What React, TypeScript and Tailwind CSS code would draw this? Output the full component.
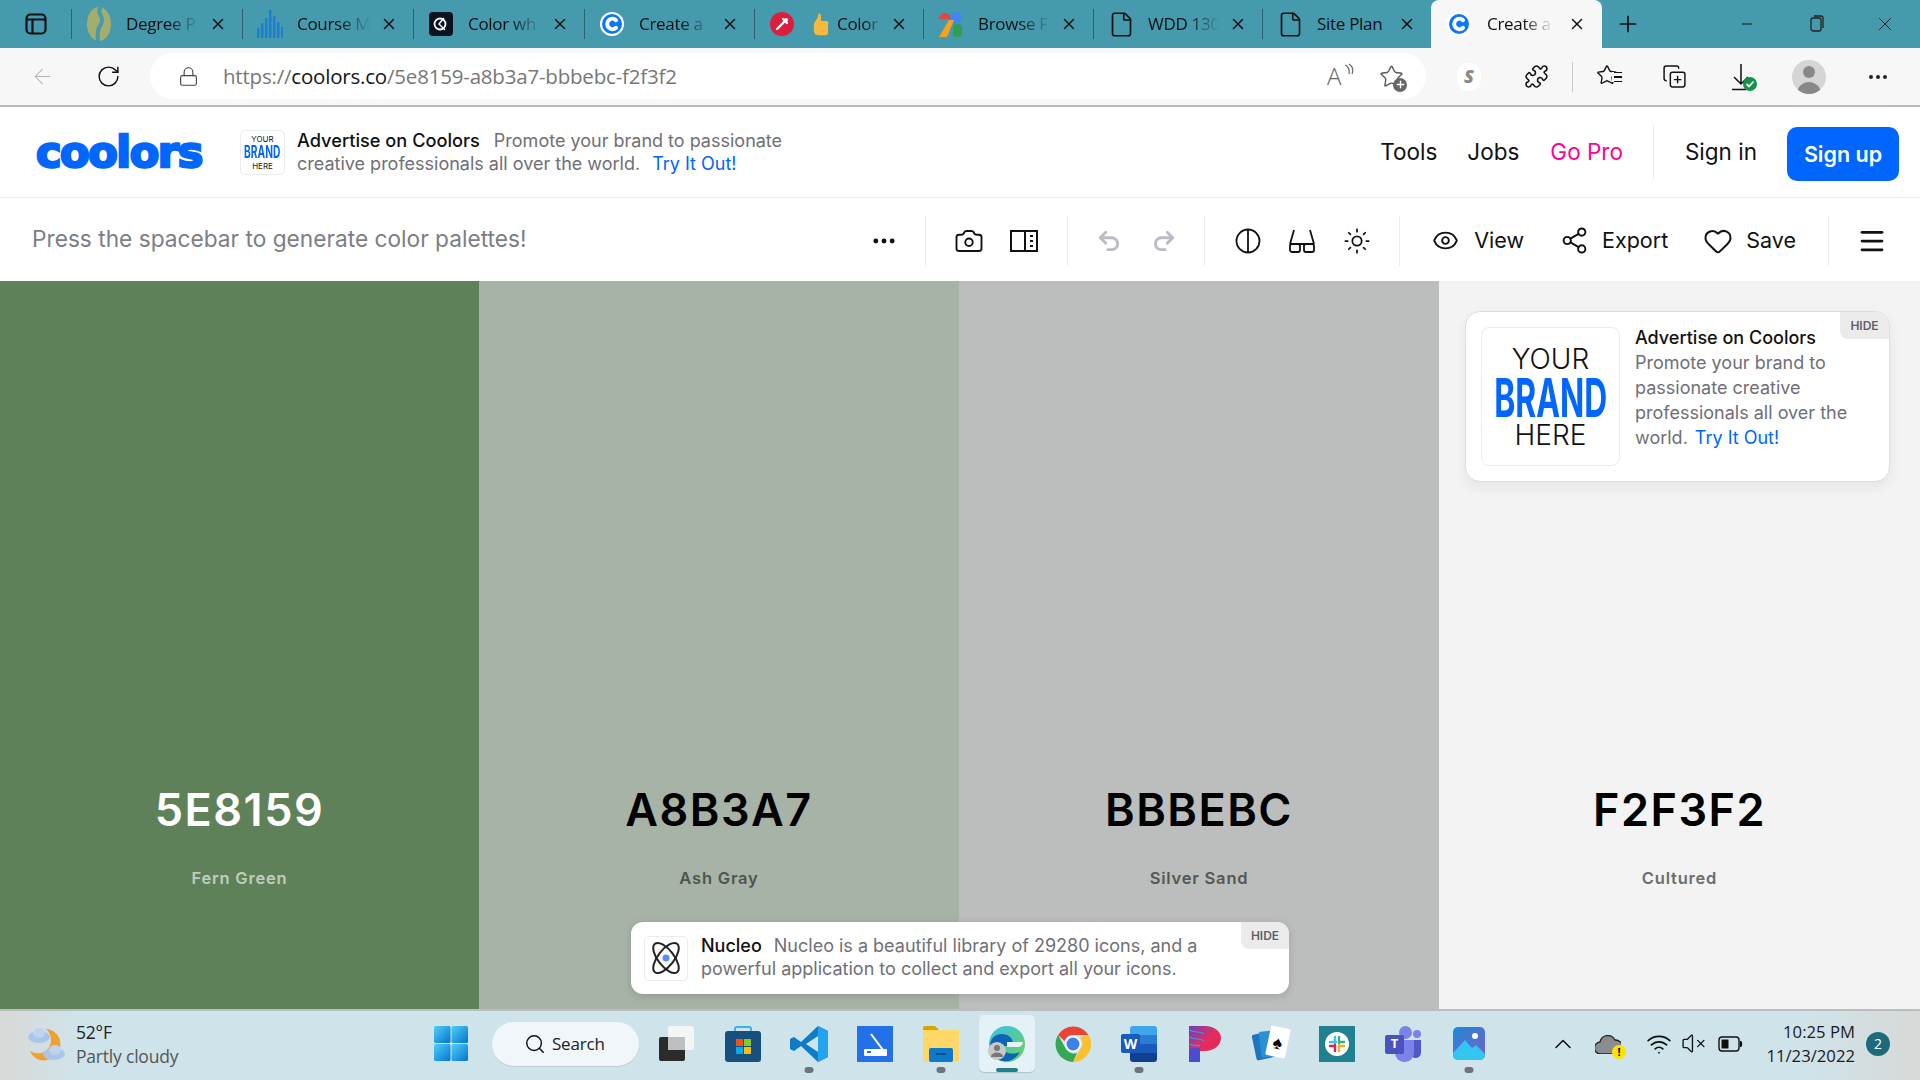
import React from 'react';
import {
  Camera,
  CopyPlus,
  Eye,
  File,
  Heart,
  Lock,
  Menu,
  Minus,
  MoreHorizontal,
  Plus,
  Puzzle,
  Redo2,
  RotateCw,
  Search,
  Share2,
  Star,
  Sun,
  Undo2,
  ArrowLeft,
  ChevronUp,
  Wifi,
  VolumeX,
  X,
} from 'lucide-react';

const systemFont = "font-['Open_Sans',sans-serif]";
const siteFont = "font-['Inter',sans-serif]";

const CoolorsFavicon = ({ size = 24 }: { size?: number }) => (
  <svg width={size} height={size} viewBox="0 0 24 24">
    <circle cx="12" cy="12" r="12" fill="#fff" />
    <circle cx="12" cy="12" r="10" fill="#0a78f5" />
    <path d="M16 8.2a5.2 5.2 0 1 0 0 7.6" fill="none" stroke="#fff" strokeWidth="4" strokeLinecap="round" />
  </svg>
);

const DegreeIcon = () => (
  <svg width="26" height="36" viewBox="0 0 26 36">
    <ellipse cx="13" cy="18" rx="12" ry="17" fill="#a3ad6d" />
    <path d="M15 1c-6 6 5 10 0 17-3 4-4 9-3 17" fill="none" stroke="#469aae" strokeWidth="4" />
  </svg>
);

const BarsIcon = () => (
  <svg width="26" height="28" viewBox="0 0 26 28" fill="#1c7fd6">
    <rect x="0" y="18" width="2.5" height="10" />
    <rect x="4" y="13" width="2.5" height="15" />
    <rect x="8" y="8" width="2.5" height="20" />
    <rect x="12" y="0" width="2.5" height="28" />
    <rect x="16" y="6" width="2.5" height="22" />
    <rect x="20" y="12" width="2.5" height="16" />
    <rect x="24" y="17" width="2" height="11" />
  </svg>
);

const ColorWheelIcon = () => (
  <svg width="24" height="24" viewBox="0 0 24 24">
    <rect width="24" height="24" rx="4" fill="#0b1220" />
    <circle cx="11" cy="12" r="5.5" fill="none" stroke="#fff" strokeWidth="1.8" />
    <path d="M15 6l-5 6 6 6" fill="none" stroke="#fff" strokeWidth="1.4" />
  </svg>
);

const DropperIcon = () => (
  <svg width="24" height="24" viewBox="0 0 24 24">
    <circle cx="12" cy="12" r="12" fill="#dc1e3c" />
    <path d="M7 17l7-7M13 7l4 4" stroke="#fff" strokeWidth="2.4" strokeLinecap="round" />
    <circle cx="16" cy="8" r="2" fill="#fff" />
  </svg>
);

const ThumbIcon = () => (
  <svg width="16" height="25" viewBox="0 0 18 26">
    <path d="M6 1c2-1 3 1 3 3v5h6c2 0 3 2 2 4v9c0 2-1 3-3 3H6c-3 0-5-2-5-4v-8c0-3 5-6 5-12z" fill="#f6b93b" />
  </svg>
);

const BrowseIcon = () => (
  <svg width="24" height="26" viewBox="0 0 24 26">
    <path d="M0 8a6 6 0 0 1 12 0z" fill="#e2453a" />
    <circle cx="17" cy="7" r="6" fill="#4285f4" />
    <path d="M0 26L10 9h5L8 26z" fill="#f6a21c" />
    <rect x="14" y="13" width="9" height="13" rx="4" fill="#2e9e4f" />
  </svg>
);

const tabFade = '[mask-image:linear-gradient(to_right,black_50%,transparent_88%)]';

const tabs = [
  { title: 'Degree P', icon: <DegreeIcon />, width: 'w-[171px]', fade: tabFade },
  { title: 'Course M', icon: <BarsIcon />, width: 'w-[171px]', fade: tabFade },
  { title: 'Color wh', icon: <ColorWheelIcon />, width: 'w-[171px]', fade: tabFade },
  { title: 'Create a', icon: <CoolorsFavicon />, width: 'w-[170px]', fade: tabFade },
  { title: 'Color', icon: <DropperIcon />, extra: <ThumbIcon />, width: 'w-[169px]', fade: tabFade },
  { title: 'Browse F', icon: <BrowseIcon />, width: 'w-[170px]', fade: tabFade },
  { title: 'WDD 130', icon: <File size={27} strokeWidth={1.5} />, width: 'w-[169px]', fade: tabFade },
  { title: 'Site Plan', icon: <File size={27} strokeWidth={1.5} />, width: 'w-[169px]', fade: '' },
];

const TabBar = () => (
  <div className={`flex h-12 shrink-0 bg-[#469aae] text-[#101010] ${systemFont}`}>
    <div className="flex w-[71px] items-center pl-6">
      <svg width="24" height="24" viewBox="0 0 24 24" fill="none" stroke="#111" strokeWidth="2.2">
        <rect x="2.5" y="2.5" width="19" height="19" rx="4" />
        <path d="M3 7.5h18M8.5 8v13" />
      </svg>
    </div>
    {tabs.map((tab) => (
      <div key={tab.title} className={`flex h-full items-center ${tab.width}`}>
        <div className="h-[30px] w-px bg-[#2a6472]" />
        <div className="flex h-full flex-1 items-center pr-[15px]">
          <div className="flex w-[54px] items-center justify-center">{tab.icon}</div>
          {tab.extra && <div className="ml-[4px] mr-[8px] flex w-[16px] justify-center">{tab.extra}</div>}
          <div className={`flex-1 overflow-hidden whitespace-nowrap text-[17px] tracking-[-0.3px] ${tab.fade}`}>
            {tab.title}
          </div>
          <X size={18} strokeWidth={2} />
        </div>
      </div>
    ))}
    <div className="flex h-full w-[171px] items-center rounded-t-lg bg-[#f7f7f7] pr-[16px]">
      <div className="flex w-[56px] items-center justify-center">
        <CoolorsFavicon />
      </div>
      <div className="flex-1 overflow-hidden whitespace-nowrap text-[17px] tracking-[-0.3px] [mask-image:linear-gradient(to_right,black_45%,transparent_82%)]">
        Create a
      </div>
      <X size={18} strokeWidth={2} />
    </div>
    <div className="flex w-[52px] items-center justify-center">
      <Plus size={26} strokeWidth={1.6} />
    </div>
    <div className="flex flex-1 items-center justify-end">
      <div className="flex w-[70px] justify-center">
        <Minus size={16} strokeWidth={1.5} />
      </div>
      <div className="flex w-[70px] justify-center">
        <svg width="16" height="18" viewBox="0 0 16 18" fill="none" stroke="#222" strokeWidth="1.3">
          <rect x="2" y="3" width="10" height="13" rx="2" />
          <path d="M5 1h7a2 2 0 0 1 2 2v10" />
        </svg>
      </div>
      <div className="mr-[2px] flex w-[66px] justify-center">
        <X size={22} strokeWidth={1} />
      </div>
    </div>
  </div>
);

const AddressBar = () => (
  <div className={`flex h-[59px] shrink-0 items-start border-b-2 border-[#b9b9b9] bg-[#f7f7f7] ${systemFont}`}>
    <div className="flex h-[57px] w-[150px] items-center">
      <div className="flex w-[84px] justify-center">
        <ArrowLeft size={25} strokeWidth={1} color="#b5b5b5" />
      </div>
      <div className="flex w-[48px] justify-center">
        <RotateCw size={25} strokeWidth={1.4} color="#111" />
      </div>
    </div>
    <div className="mt-[5px] flex h-[46px] w-[1276px] items-center rounded-full bg-white pl-[28px]">
      <Lock size={21} strokeWidth={1.3} color="#444" />
      <div className="ml-[24px] flex-1 text-[20.5px] tracking-[-0.2px] text-[#777]">
        https://<span className="text-[#151515]">coolors.co</span>/5e8159-a8b3a7-bbbebc-f2f3f2
      </div>
      <div className="relative mr-[26px] flex w-[26px] items-start text-[24px] font-light leading-none text-[#666]">
        A
        <svg className="absolute -right-[1px] -top-[1px]" width="11" height="14" viewBox="0 0 11 14" fill="none" stroke="#666" strokeWidth="1.2">
          <path d="M2 2c3 1 5 5 4 9M6 1c3 2 5 5 3 10" />
        </svg>
      </div>
      <div className="relative mr-[22px]">
        <Star size={25} strokeWidth={1.3} color="#555" />
        <div className="absolute -bottom-[3px] -right-[3px] flex h-[14px] w-[14px] items-center justify-center rounded-full bg-[#666]">
          <Plus size={11} strokeWidth={3} color="#fff" />
        </div>
      </div>
    </div>
    <div className="flex h-[57px] flex-1 items-center">
      <div className="ml-[31px] flex h-[28px] w-[24px] items-center justify-center rounded-full bg-white text-[18px] font-extrabold italic text-[#8a8a8a]">
        S
      </div>
      <Puzzle className="ml-[43px]" size={25} strokeWidth={1.5} color="#111" />
      <div className="ml-[23px] h-[30px] w-px bg-[#c8c8c8]" />
      <div className="relative ml-[23px] h-[26px] w-[26px]">
        <Star size={22} strokeWidth={1.5} color="#111" />
        <div className="absolute right-0 top-[8px] flex w-[10px] flex-col gap-[3px] bg-[#f7f7f7] pl-[2px]">
          <div className="h-[1.5px] bg-[#111]" />
          <div className="h-[1.5px] bg-[#111]" />
          <div className="h-[1.5px] bg-[#111]" />
        </div>
      </div>
      <CopyPlus className="ml-[40px]" size={25} strokeWidth={1.4} color="#111" />
      <div className="relative ml-[44px]">
        <svg width="24" height="28" viewBox="0 0 24 28" fill="none" stroke="#111" strokeWidth="1.5">
          <path d="M10 1v20M3 14l7 7 7-7M1 26.5h14" />
        </svg>
        <div className="absolute -right-[2px] bottom-0 flex h-[14px] w-[14px] items-center justify-center rounded-full bg-[#12924a]">
          <svg width="10" height="10" viewBox="0 0 10 10" fill="none" stroke="#fff" strokeWidth="1.8">
            <path d="M1.5 5l2.5 2.5 4.5-5" />
          </svg>
        </div>
      </div>
      <div className="relative ml-[37px] flex h-[34px] w-[34px] items-end justify-center overflow-hidden rounded-full bg-[#d5d5d5]">
        <div className="absolute top-[6px] h-[12px] w-[12px] rounded-full bg-[#888]" />
        <div className="h-[12px] w-[24px] rounded-t-full bg-[#888]" />
      </div>
      <MoreHorizontal className="ml-[40px]" size={24} strokeWidth={2} color="#222" />
    </div>
  </div>
);

const BrandTile = () => (
  <div className="flex h-[45px] w-[45px] shrink-0 flex-col items-center justify-center rounded-[5px] border border-[#ececec] leading-none">
    <span className="text-[8px] text-[#222]">YOUR</span>
    <span className="my-[1px] origin-center scale-x-[0.6] text-[17px] font-bold text-[#0066ff]">BRAND</span>
    <span className="text-[8px] text-[#222]">HERE</span>
  </div>
);

const TopHeader = () => (
  <div className={`flex h-[91px] shrink-0 items-center border-b border-[#ececec] bg-white ${siteFont}`}>
    <div className="ml-[36px] w-[204px] font-['DejaVu_Sans',sans-serif] text-[43px] font-bold leading-none tracking-[-1.4px] text-[#0066ff] [-webkit-text-stroke:2.5px_#0066ff]">
      coolors
    </div>
    <BrandTile />
    <div className="ml-3 text-[18px] leading-[23px] text-[#6f6f78]">
      <div>
        <span className="text-[18.2px] font-medium text-[#111]">Advertise on Coolors</span>
        <span className="ml-[14px]">Promote your brand to passionate</span>
      </div>
      <div>
        creative professionals all over the world.<span className="ml-3 text-[#0066ff]">Try It Out!</span>
      </div>
    </div>
    <div className="ml-auto flex items-center text-[22.5px] text-[#111]">
      <span>Tools</span>
      <span className="ml-[30px]">Jobs</span>
      <span className="ml-[31px] text-[#ff0099]">Go Pro</span>
      <div className="ml-[30px] h-[54px] w-px bg-[#ececec]" />
      <span className="ml-[31px]">Sign in</span>
      <div className="ml-[30px] mr-[21px] mt-[4px] flex h-[54px] w-[112px] items-center justify-center rounded-[10px] bg-[#0066ff] text-[21.5px] font-semibold text-white">
        Sign up
      </div>
    </div>
  </div>
);

const ToolbarDivider = () => <div className="h-[50px] w-px bg-[#ececec]" />;

const Toolbar = () => (
  <div className={`flex h-[83px] shrink-0 items-center bg-white text-[#111] ${siteFont}`}>
    <div className="ml-[32px] text-[22.7px] text-[#7d7d86]">Press the spacebar to generate color palettes!</div>
    <div className="ml-auto flex items-center pt-[2px]">
      <MoreHorizontal size={28} strokeWidth={2.2} />
      <div className="ml-[27px]"><ToolbarDivider /></div>
      <Camera className="ml-[28px]" size={30} strokeWidth={1.5} />
      <svg className="ml-[26px]" width="28" height="24" viewBox="0 0 28 24" fill="none" stroke="#111" strokeWidth="2">
        <rect x="1" y="2" width="26" height="20" />
        <path d="M15 2v20M20 7h3M20 12h3M20 17h3" />
      </svg>
      <div className="ml-[29px]"><ToolbarDivider /></div>
      <Undo2 className="ml-[28px]" size={26} strokeWidth={2.6} color="#b9bcc4" />
      <Redo2 className="ml-[29px]" size={26} strokeWidth={2.6} color="#b9bcc4" />
      <div className="ml-[27px]"><ToolbarDivider /></div>
      <svg className="ml-[30px]" width="26" height="26" viewBox="0 0 26 26" fill="none" stroke="#111" strokeWidth="1.8">
        <circle cx="13" cy="13" r="11.5" />
        <path d="M13 1.5v23" />
      </svg>
      <svg className="ml-[27px]" width="28" height="26" viewBox="0 0 28 26" fill="none" stroke="#111" strokeWidth="1.8">
        <path d="M6 2L2 16M22 2l4 14M2 16h24" />
        <rect x="2" y="16" width="10" height="8" rx="2" />
        <rect x="16" y="16" width="10" height="8" rx="2" />
      </svg>
      <Sun className="ml-[27px]" size={28} strokeWidth={1.5} />
      <div className="ml-[28px]"><ToolbarDivider /></div>
      <Eye className="ml-[32px]" size={27} strokeWidth={1.7} />
      <span className="ml-[15px] text-[21.5px]">View</span>
      <Share2 className="ml-[36px]" size={29} strokeWidth={1.6} />
      <span className="ml-[13px] text-[21.5px]">Export</span>
      <Heart className="ml-[35px]" size={30} strokeWidth={1.6} />
      <span className="ml-[13px] text-[21.5px]">Save</span>
      <div className="ml-[32px]"><ToolbarDivider /></div>
      <Menu className="ml-[28px] mr-[33px]" size={30} strokeWidth={2.2} />
    </div>
  </div>
);

const swatches = [
  { hex: '5E8159', name: 'Fern Green', bg: 'bg-[#5e8159]', text: 'text-white', sub: 'text-[#bfcdbd]' },
  { hex: 'A8B3A7', name: 'Ash Gray', bg: 'bg-[#a8b3a7]', text: 'text-black', sub: 'text-[#4f554f]' },
  { hex: 'BBBEBC', name: 'Silver Sand', bg: 'bg-[#bbbebc]', text: 'text-black', sub: 'text-[#555755]' },
  { hex: 'F2F3F2', name: 'Cultured', bg: 'bg-[#f2f3f2]', text: 'text-black', sub: 'text-[#6c6d6c]' },
];

const Palette = () => (
  <div className={`relative grid min-h-0 flex-1 grid-cols-[479px_480px_480px_481px] ${siteFont}`}>
    {swatches.map((s) => (
      <div key={s.hex} className={`flex flex-col items-center justify-end pb-[119px] ${s.bg}`}>
        <div className={`text-[45px] font-semibold leading-[56px] tracking-[1.5px] ${s.text}`}>{s.hex}</div>
        <div className={`mt-[28px] text-[16.5px] font-semibold leading-[24px] tracking-[0.8px] ${s.sub}`}>{s.name}</div>
      </div>
    ))}

    <div className="absolute right-[30px] top-[30px] flex h-[171px] w-[425px] gap-[15px] rounded-[15px] border border-[#dedede] bg-white p-[15px] shadow-[0_6px_14px_rgba(0,0,0,0.06)]">
      <div className="flex h-[139px] w-[139px] shrink-0 flex-col items-center justify-center rounded-[8px] border border-[#ececec] leading-none">
        <span className="text-[28px] font-light leading-[28px] text-[#111]">YOUR</span>
        <span className="mt-[3px] origin-center scale-x-[0.59] text-[54px] font-bold leading-[44px] text-[#0066ff]">BRAND</span>
        <span className="mt-[1px] text-[28px] font-light leading-[28px] text-[#111]">HERE</span>
      </div>
      <div className="-mt-[2px] text-[18px] leading-[25px] text-[#6f6f78]">
        <div className="font-medium text-[#111]">Advertise on Coolors</div>
        <div>Promote your brand to</div>
        <div>passionate creative</div>
        <div>professionals all over the</div>
        <div>
          <span>world.</span>
          <span className="ml-[7px] text-[#0066ff]">Try It Out!</span>
        </div>
      </div>
      <div className="absolute right-0 top-0 flex h-[27px] w-[49px] items-center justify-center rounded-bl-[8px] rounded-tr-[15px] bg-[#ebebeb] text-[12px] font-semibold text-[#5f5f68]">
        HIDE
      </div>
    </div>

    <div className="absolute bottom-[15px] left-[631px] flex h-[72px] w-[658px] items-center rounded-[12px] bg-white pl-[13px] shadow-[0_2px_8px_rgba(0,0,0,0.15)]">
      <div className="flex h-[45px] w-[44px] shrink-0 items-center justify-center rounded-[5px] border border-[#ececec]">
        <svg width="36" height="36" viewBox="0 0 36 36" fill="none" stroke="#222" strokeWidth="2">
          <ellipse cx="18" cy="18" rx="8" ry="18" transform="rotate(-38 18 18)" />
          <ellipse cx="18" cy="18" rx="8" ry="18" transform="rotate(38 18 18)" />
          <circle cx="18" cy="18" r="3.5" fill="#5b8def" stroke="none" />
        </svg>
      </div>
      <div className="ml-[13px] -mt-[2px] text-[18px] leading-[23px] text-[#6f6f78]">
        <div>
          <span className="font-medium text-[#111]">Nucleo</span>
          <span className="ml-3">Nucleo is a beautiful library of 29280 icons, and a</span>
        </div>
        <div>powerful application to collect and export all your icons.</div>
      </div>
      <div className="absolute right-0 top-0 flex h-[27px] w-[48px] items-center justify-center rounded-bl-[8px] rounded-tr-[12px] bg-[#ebebeb] text-[12px] font-semibold text-[#5f5f68]">
        HIDE
      </div>
    </div>
  </div>
);

const WeatherIcon = () => (
  <svg width="38" height="36" viewBox="0 0 38 36">
    <path d="M18 3c7 6 7 18-2 23-4 2-9 2-14-1 3 7 10 11 17 9 9-2 15-10 13-19-1-6-7-12-14-12z" fill="#f0a030" />
    <ellipse cx="11" cy="11" rx="11" ry="6" fill="#a9c6ea" />
    <ellipse cx="11" cy="7" rx="6" ry="5" fill="#bcd4f0" />
    <ellipse cx="26" cy="28" rx="11" ry="6" fill="#a9c6ea" />
    <ellipse cx="27" cy="24" rx="6" ry="5" fill="#bcd4f0" />
  </svg>
);

const WindowsLogo = () => (
  <svg width="34" height="35" viewBox="0 0 34 35">
    <defs>
      <linearGradient id="win" x1="0" y1="0" x2="1" y2="1">
        <stop offset="0" stopColor="#4fd0f8" />
        <stop offset="1" stopColor="#0573d0" />
      </linearGradient>
    </defs>
    <rect x="0" y="0" width="16.5" height="17" rx="1.5" fill="url(#win)" />
    <rect x="17.5" y="0" width="16.5" height="17" rx="1.5" fill="url(#win)" />
    <rect x="0" y="18" width="16.5" height="17" rx="1.5" fill="url(#win)" />
    <rect x="17.5" y="18" width="16.5" height="17" rx="1.5" fill="url(#win)" />
  </svg>
);

const TaskView = () => (
  <svg width="36" height="36" viewBox="0 0 36 36">
    <rect x="0" y="11" width="26" height="24" rx="2" fill="#2b2b2b" />
    <rect x="9" y="0" width="26" height="24" rx="2" fill="#f4f5f5" />
    <rect x="9" y="11" width="17" height="13" fill="#bdbfc0" />
  </svg>
);

const StoreIcon = () => (
  <svg width="36" height="36" viewBox="0 0 36 36">
    <path d="M10 6V3a2 2 0 0 1 2-2h12a2 2 0 0 1 2 2v3" fill="none" stroke="#35b4e8" strokeWidth="2" />
    <rect x="0" y="5" width="36" height="31" rx="3" fill="#17507f" />
    <rect x="11" y="13" width="7" height="7" fill="#f1511b" />
    <rect x="19" y="13" width="7" height="7" fill="#80cc28" />
    <rect x="11" y="21" width="7" height="7" fill="#00adef" />
    <rect x="19" y="21" width="7" height="7" fill="#fbbc09" />
  </svg>
);

const VsCodeIcon = () => (
  <svg width="38" height="38" viewBox="0 0 38 38">
    <path d="M28 1l10 5v26l-10 5-17-16-7 5-4-2V14l4-2 7 5z" fill="#0e7cc7" />
    <path d="M28 1l10 5v26l-10 5z" fill="#22a4ef" />
    <path d="M28 11L16 19l12 8z" fill="#cfe4ea" />
  </svg>
);

const ScannerIcon = () => (
  <svg width="36" height="36" viewBox="0 0 36 36">
    <rect width="36" height="36" fill="#2470e8" />
    <path d="M14 8l12 16" stroke="#fff" strokeWidth="2" />
    <rect x="7" y="23" width="23" height="7" rx="1" fill="#fff" />
    <rect x="10" y="25" width="4" height="2" fill="#2470e8" />
  </svg>
);

const FolderIcon = () => (
  <svg width="36" height="36" viewBox="0 0 36 36">
    <path d="M0 2a2 2 0 0 1 2-2h10l4 4H0z" fill="#d9a400" />
    <rect x="0" y="4" width="36" height="32" rx="1" fill="#ffd766" />
    <rect x="6" y="22" width="24" height="14" rx="2" fill="#0f78c9" />
    <rect x="13" y="27" width="10" height="2" fill="#0b4f8f" />
  </svg>
);

const EdgeIcon = () => (
  <svg width="38" height="38" viewBox="0 0 38 38">
    <defs>
      <linearGradient id="edge" x1="0" y1="0" x2="1" y2="1">
        <stop offset="0" stopColor="#36c2e8" />
        <stop offset="1" stopColor="#6fd05c" />
      </linearGradient>
    </defs>
    <circle cx="19" cy="19" r="18" fill="url(#edge)" />
    <path d="M2 20C3 10 12 7 19 10c5 2 7 7 5 11H14c0 6 8 10 18 6-4 7-11 10-17 9C7 35 1 28 2 20z" fill="#0d63b8" />
    <path d="M19 17h16a6 6 0 0 1-4 5H19z" fill="#e9f3f7" />
    <circle cx="9" cy="26" r="9" fill="#c9c9c9" />
    <circle cx="9" cy="23" r="3" fill="#777" />
    <path d="M3 32c0-6 12-6 12 0z" fill="#777" />
  </svg>
);

const ChromeIcon = () => (
  <svg width="36" height="36" viewBox="0 0 36 36">
    <path d="M3 9a18 18 0 0 1 30.6 0H18a9 9 0 0 0-8.5 6z" fill="#ea4335" />
    <path d="M33.6 9A18 18 0 0 1 18 36l8-14a9 9 0 0 0-1-11z" fill="#fbc02d" />
    <path d="M18 36A18 18 0 0 1 3 9l8 14a9 9 0 0 0 11 4z" fill="#34a853" />
    <circle cx="18" cy="18" r="8" fill="#fff" />
    <circle cx="18" cy="18" r="6.5" fill="#3f7fea" />
  </svg>
);

const WordIcon = () => (
  <div className="relative h-[36px] w-[36px]">
    <div className="absolute right-0 top-0 flex h-full w-[27px] flex-col overflow-hidden rounded-[3px]">
      <div className="flex-1 bg-[#41a5ee]" />
      <div className="flex-1 bg-[#2b7cd3]" />
      <div className="flex-1 bg-[#185abd]" />
      <div className="flex-1 bg-[#103f91]" />
    </div>
    <div className="absolute left-0 top-[8px] flex h-[19px] w-[19px] items-center justify-center rounded-[2px] bg-[#185abd] text-[14px] font-bold text-white">
      W
    </div>
  </div>
);

const PandoraIcon = () => (
  <svg width="32" height="36" viewBox="0 0 32 36">
    <defs>
      <linearGradient id="pan" x1="0" y1="0" x2="1" y2="1">
        <stop offset="0" stopColor="#6d3fbf" />
        <stop offset="0.5" stopColor="#e82c5c" />
        <stop offset="1" stopColor="#d92860" />
      </linearGradient>
    </defs>
    <path d="M0 0h16c9 0 16 5 16 12s-7 13-16 13h-5v11H0z" fill="url(#pan)" />
    <path d="M0 24c5-4 8 0 11-3v15H0z" fill="#4a4bd0" />
    <path d="M1 4c5 4 9 0 14 4M1 11c5 4 9 0 14 4M1 18c4 3 8 0 10 2" fill="none" stroke="#3f9bd8" strokeWidth="1.2" />
  </svg>
);

const SolitaireIcon = () => (
  <div className="relative h-[36px] w-[34px]">
    <div className="absolute left-0 top-[7px] h-[26px] w-[18px] -rotate-12 rounded-[2px] bg-[#1f74bf]" />
    <div className="absolute left-[6px] top-[5px] h-[26px] w-[18px] -rotate-6 rounded-[2px] bg-[#2c8fd6]" />
    <div className="absolute right-0 top-[1px] flex h-[30px] w-[20px] rotate-12 items-center justify-center rounded-[2px] bg-white text-[18px] leading-none text-black">
      ♠
    </div>
  </div>
);

const SlackIcon = () => (
  <div className="flex h-[36px] w-[36px] items-center justify-center bg-[#20808f]">
    <svg width="24" height="24" viewBox="0 0 24 24">
      <circle cx="12" cy="12" r="12" fill="#fff" />
      <path d="M10 5v6M5 10h6" stroke="#36c5f0" strokeWidth="2.4" strokeLinecap="round" />
      <path d="M14 5v6M14 10h5" stroke="#2eb67d" strokeWidth="2.4" strokeLinecap="round" />
      <path d="M10 19v-6M5 14h5" stroke="#e01e5a" strokeWidth="2.4" strokeLinecap="round" />
      <path d="M14 19v-6M14 14h5" stroke="#ecb22e" strokeWidth="2.4" strokeLinecap="round" />
    </svg>
  </div>
);

const TeamsIcon = () => (
  <div className="relative h-[36px] w-[36px]">
    <div className="absolute right-0 top-[4px] h-[8px] w-[8px] rounded-full bg-[#7b83eb]" />
    <div className="absolute left-[14px] top-0 h-[13px] w-[13px] rounded-full bg-[#7b83eb]" />
    <div className="absolute right-0 top-[14px] h-[18px] w-[11px] rounded-b-[6px] bg-[#5059c9]" />
    <div className="absolute left-[10px] top-[14px] h-[22px] w-[19px] rounded-b-[9px] bg-[#7b83eb]" />
    <div className="absolute left-0 top-[9px] flex h-[19px] w-[19px] items-center justify-center rounded-[2px] bg-[#4b53bc] text-[13px] font-bold text-white">
      T
    </div>
  </div>
);

const PhotosIcon = () => (
  <svg width="32" height="33" viewBox="0 0 32 33">
    <defs>
      <linearGradient id="pho" x1="0" y1="0" x2="1" y2="1">
        <stop offset="0" stopColor="#1d8ad8" />
        <stop offset="1" stopColor="#7a5fc4" />
      </linearGradient>
    </defs>
    <rect width="32" height="33" rx="5" fill="url(#pho)" />
    <circle cx="22" cy="9" r="3" fill="#fff" />
    <path d="M0 26l12-13 7 8 4-3 9 9v1a5 5 0 0 1-5 5H5a5 5 0 0 1-5-5z" fill="#33c7ef" />
  </svg>
);

const RunningDot = () => <div className="h-[6px] w-[9px] rounded-full bg-[#6e7579]" />;

const dockItems = [
  { key: 'task', icon: <TaskView /> },
  { key: 'store', icon: <StoreIcon /> },
  { key: 'code', icon: <VsCodeIcon />, running: true },
  { key: 'scan', icon: <ScannerIcon /> },
  { key: 'folder', icon: <FolderIcon />, running: true },
  { key: 'edge', icon: <EdgeIcon />, active: true },
  { key: 'chrome', icon: <ChromeIcon /> },
  { key: 'word', icon: <WordIcon />, running: true },
  { key: 'pandora', icon: <PandoraIcon /> },
  { key: 'cards', icon: <SolitaireIcon /> },
  { key: 'slack', icon: <SlackIcon /> },
  { key: 'teams', icon: <TeamsIcon /> },
  { key: 'photos', icon: <PhotosIcon />, running: true },
];

const Taskbar = () => (
  <div className={`flex h-[71px] shrink-0 items-center border-t-2 border-[#b9bec0] bg-[linear-gradient(to_right,#d8d8d8_0px,#cfe4ea_80px,#cfe4ea_1800px,#d8d8d8_1920px)] pb-[4px] ${systemFont}`}>
    <div className="ml-[28px] flex w-[406px] items-center">
      <WeatherIcon />
      <div className="ml-[10px] text-[17.5px] leading-[24px] tracking-[-0.2px]">
        <div className="text-[#222]">52°F</div>
        <div className="text-[#555]">Partly cloudy</div>
      </div>
    </div>
    <WindowsLogo />
    <div className="ml-[24px] flex h-[44px] w-[147px] items-center rounded-full bg-[#f0f6f9] pl-[32px] shadow-[0_1px_1px_rgba(0,0,0,0.1)]">
      <Search size={22} strokeWidth={1.6} color="#111" />
      <span className="ml-[6px] text-[17px] tracking-[-0.2px] text-[#222]">Search</span>
    </div>
    <div className="ml-[5px] flex">
      {dockItems.map((item) => (
        <div key={item.key} className="flex h-[65px] w-[66px] items-center justify-center">
          <div className={`relative flex h-[57px] w-[56px] items-center justify-center rounded-[5px] ${item.active ? 'bg-[#e4f1f6] shadow-[0_1px_1px_rgba(0,0,0,0.15)]' : ''}`}>
            {item.icon}
            {item.running && (
              <div className="absolute -bottom-[1px] left-1/2 -translate-x-1/2">
                <RunningDot />
              </div>
            )}
            {item.active && <div className="absolute bottom-0 left-[17px] h-[4px] w-[22px] rounded-full bg-[#20808f]" />}
          </div>
        </div>
      ))}
    </div>
    <div className="ml-[47px] flex items-center">
      <ChevronUp size={28} strokeWidth={1.3} color="#111" />
      <div className="relative ml-[18px]">
        <svg width="26" height="20" viewBox="0 0 26 20">
          <path d="M6 20a6 6 0 0 1-1-12 8 8 0 0 1 15-2 7 7 0 0 1 1 14z" fill="#8a8d8f" stroke="#222" strokeWidth="1.3" />
        </svg>
        <div className="absolute -bottom-[5px] -right-[5px] flex h-[14px] w-[14px] items-center justify-center rounded-full bg-[#ffe100] text-[11px] font-bold leading-none text-black">
          !
        </div>
      </div>
      <Wifi className="ml-[25px]" size={26} strokeWidth={1.6} color="#111" />
      <VolumeX className="ml-[9px]" size={25} strokeWidth={1.3} color="#111" />
      <svg className="ml-[12px]" width="25" height="16" viewBox="0 0 25 16" fill="none" stroke="#111" strokeWidth="1.4">
        <rect x="1" y="1" width="20" height="14" rx="3" />
        <rect x="3.5" y="3.5" width="7" height="9" fill="#111" stroke="none" />
        <path d="M22 5.5c2 0 2 5 0 5" fill="#111" />
      </svg>
    </div>
    <div className="ml-[22px] w-[90px] text-right text-[16.7px] leading-[24px] text-[#1b1b1b]">
      <div>10:25 PM</div>
      <div className="whitespace-nowrap">11/23/2022</div>
    </div>
    <div className="ml-[11px] flex h-[24px] w-[24px] items-center justify-center rounded-full bg-[#1c6a7a] text-[14px] text-white">
      2
    </div>
  </div>
);

export default function App() {
  return (
    <div className="flex h-[1080px] w-[1920px] flex-col overflow-hidden">
      <TabBar />
      <AddressBar />
      <TopHeader />
      <Toolbar />
      <Palette />
      <Taskbar />
    </div>
  );
}
